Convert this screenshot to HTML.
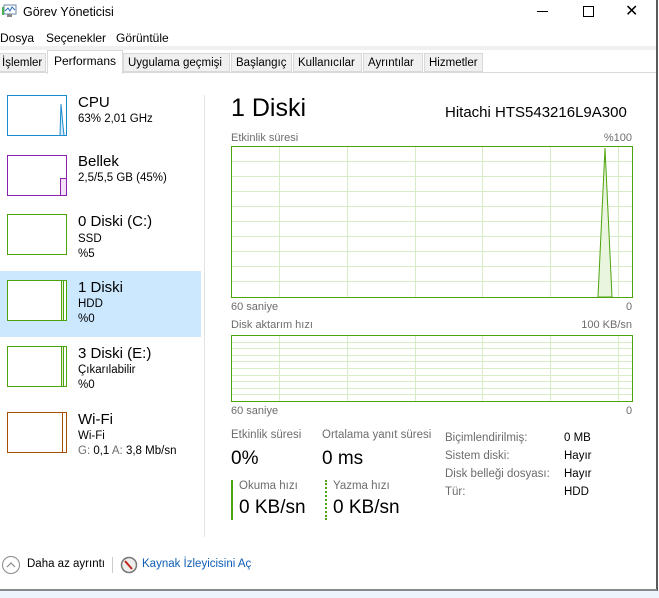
<!DOCTYPE html>
<html><head><meta charset="utf-8"><style>
*{margin:0;padding:0;box-sizing:border-box}
body{width:659px;height:598px;background:#fff;font-family:"Liberation Sans","DejaVu Sans",sans-serif;font-size:12px;color:#000;position:relative;overflow:hidden}
.a{position:absolute;white-space:nowrap}
.g{color:#6d6d6d}
.tab{position:absolute;top:53px;height:19px;background:#f0f0f0;border:1px solid #d9d9d9;font-size:11.5px;padding:3px 0 0 4px;color:#000}
.thumb{position:absolute;left:7px;width:60px;height:41px;background:#fff}
.t1{font-size:15px}
.t2{font-size:11.5px}
</style></head><body>
<!-- title -->
<svg class="a" style="left:1px;top:4px" width="16" height="14"><rect x="3" y="1" width="12" height="9" fill="#fff" stroke="#6b8aa8"/><polyline points="4,7 7,4 9,7 11,3 14,6" fill="none" stroke="#2a70c0" stroke-width="1"/><rect x="1" y="3" width="2" height="8" fill="#4caf50"/><rect x="6" y="10" width="5" height="3" fill="#888"/></svg>
<div class="a" style="left:23px;top:5px;font-size:12.5px">Görev Yöneticisi</div>
<div class="a" style="left:537px;top:11px;width:11px;height:1px;background:#000"></div>
<div class="a" style="left:583px;top:6px;width:11px;height:11px;border:1px solid #000"></div>
<div class="a" style="left:625px;top:1px;font-size:16px">✕</div>
<div class="a" style="left:656px;top:0;width:2px;height:592px;background:#5a5a5a"></div>
<!-- menu -->
<div class="a" style="left:0;top:31px;font-size:12px">Dosya</div>
<div class="a" style="left:46px;top:31px;font-size:12px">Seçenekler</div>
<div class="a" style="left:116px;top:31px;font-size:12px">Görüntüle</div>
<div class="a" style="left:0;top:46px;width:656px;height:4px;background:#f0f0f0"></div>
<!-- tabs -->
<div class="tab" style="left:-3px;width:49px">İşlemler</div>
<div class="tab" style="left:123px;width:107px">Uygulama geçmişi</div>
<div class="tab" style="left:231px;width:61px">Başlangıç</div>
<div class="tab" style="left:293px;width:69px">Kullanıcılar</div>
<div class="tab" style="left:363px;width:60px">Ayrıntılar</div>
<div class="tab" style="left:424px;width:59px">Hizmetler</div>
<div class="a" style="left:47px;top:50px;width:76px;height:24px;background:#fff;border:1px solid #d9d9d9;border-bottom:none;font-size:12px;padding:3px 0 0 6px">Performans</div>
<div class="a" style="left:0;top:72px;width:47px;height:1px;background:#d9d9d9"></div>
<div class="a" style="left:123px;top:72px;width:533px;height:1px;background:#d9d9d9"></div>
<!-- left list -->
<div class="a" style="left:0;top:271px;width:201px;height:66px;background:#cce8ff"></div>
<div class="thumb" style="top:95px;border:1px solid #1a8bd0"><svg width="58" height="39" style="position:absolute;left:0;top:0"><polyline points="52,39 53,8 55,30 56,39" fill="#d6ecfa" stroke="#1a8bd0"/></svg></div>
<div class="a t1" style="left:78px;top:94px">CPU</div><div class="a t2" style="left:78px;top:113px">63% 2,01 GHz</div>
<div class="thumb" style="top:155px;border:1px solid #8b1fae"><div class="a" style="left:52px;top:22px;width:6px;height:17px;border:1px solid #8b1fae;background:#f1e0f6;border-right:none;border-bottom:none"></div></div>
<div class="a t1" style="left:78px;top:153px">Bellek</div><div class="a t2" style="left:78px;top:172px">2,5/5,5 GB (45%)</div>
<div class="thumb" style="top:214px;border:1px solid #4da30b"></div>
<div class="a t1" style="left:78px;top:213px">0 Diski (C:)</div><div class="a t2" style="left:78px;top:233px">SSD</div><div class="a t2" style="left:78px;top:248px">%5</div>
<div class="thumb" style="top:280px;border:1px solid #4da30b"><div class="a" style="left:53px;top:0;width:3px;height:39px;border-left:1px solid #4da30b;border-right:1px solid #4da30b;background:#e8f5dc"></div></div>
<div class="a t1" style="left:78px;top:279px">1 Diski</div><div class="a t2" style="left:78px;top:298px">HDD</div><div class="a t2" style="left:78px;top:313px">%0</div>
<div class="thumb" style="top:346px;border:1px solid #4da30b"><div class="a" style="left:53px;top:0;width:3px;height:39px;border-left:1px solid #4da30b;border-right:1px solid #4da30b;background:#e8f5dc"></div></div>
<div class="a t1" style="left:78px;top:345px">3 Diski (E:)</div><div class="a t2" style="left:78px;top:364px">Çıkarılabilir</div><div class="a t2" style="left:78px;top:379px">%0</div>
<div class="thumb" style="top:412px;border:1px solid #a74f01"><div class="a" style="left:54px;top:0;width:1px;height:39px;background:#a74f01"></div></div>
<div class="a t1" style="left:78px;top:411px">Wi-Fi</div><div class="a t2" style="left:78px;top:430px">Wi-Fi</div>
<div class="a t2" style="left:78px;top:445px"><span class="g">G:</span> 0,1 <span class="g">A:</span> 3,8 Mb/sn</div>
<div class="a" style="left:204px;top:95px;width:1px;height:442px;background:#e3e3e3"></div>
<!-- right -->
<div class="a" style="left:231px;top:94px;font-size:25px">1 Diski</div>
<div class="a" style="left:445px;top:104px;font-size:15px">Hitachi HTS543216L9A300</div>
<div class="a g" style="left:231px;top:132px;font-size:11px">Etkinlik süresi</div>
<div class="a g" style="left:632px;top:132px;font-size:11px;transform:translateX(-100%)">%100</div>
<svg class="a" style="left:231px;top:146px" width="402" height="152">
<g stroke="#d9ecc8" stroke-width="1">
<line x1="48.5" y1="0" x2="48.5" y2="152"/><line x1="116.5" y1="0" x2="116.5" y2="152"/><line x1="184.5" y1="0" x2="184.5" y2="152"/><line x1="251.5" y1="0" x2="251.5" y2="152"/><line x1="319.5" y1="0" x2="319.5" y2="152"/><line x1="387.5" y1="0" x2="387.5" y2="152"/>
<line x1="0" y1="15.5" x2="402" y2="15.5"/><line x1="0" y1="30.5" x2="402" y2="30.5"/><line x1="0" y1="45.5" x2="402" y2="45.5"/><line x1="0" y1="60.5" x2="402" y2="60.5"/><line x1="0" y1="75.5" x2="402" y2="75.5"/><line x1="0" y1="90.5" x2="402" y2="90.5"/><line x1="0" y1="105.5" x2="402" y2="105.5"/><line x1="0" y1="120.5" x2="402" y2="120.5"/><line x1="0" y1="135.5" x2="402" y2="135.5"/>
</g>
<polygon points="367,151 374,2 381,151" fill="#eaf5e0" stroke="#4da30b" stroke-width="1"/>
<rect x="0.5" y="0.5" width="401" height="151" fill="none" stroke="#4da30b"/>
</svg>
<div class="a g" style="left:231px;top:301px;font-size:11px">60 saniye</div>
<div class="a g" style="left:626px;top:301px;font-size:11px">0</div>
<div class="a g" style="left:231px;top:319px;font-size:11px">Disk aktarım hızı</div>
<div class="a g" style="left:632px;top:319px;font-size:11px;transform:translateX(-100%)">100 KB/sn</div>
<svg class="a" style="left:231px;top:335px" width="402" height="67">
<g stroke="#d9ecc8" stroke-width="1">
<line x1="48.5" y1="0" x2="48.5" y2="67"/><line x1="116.5" y1="0" x2="116.5" y2="67"/><line x1="184.5" y1="0" x2="184.5" y2="67"/><line x1="251.5" y1="0" x2="251.5" y2="67"/><line x1="319.5" y1="0" x2="319.5" y2="67"/><line x1="387.5" y1="0" x2="387.5" y2="67"/>
<line x1="0" y1="7.5" x2="402" y2="7.5"/><line x1="0" y1="13.5" x2="402" y2="13.5"/><line x1="0" y1="20.5" x2="402" y2="20.5"/><line x1="0" y1="26.5" x2="402" y2="26.5"/><line x1="0" y1="33.5" x2="402" y2="33.5"/><line x1="0" y1="40.5" x2="402" y2="40.5"/><line x1="0" y1="46.5" x2="402" y2="46.5"/><line x1="0" y1="53.5" x2="402" y2="53.5"/><line x1="0" y1="59.5" x2="402" y2="59.5"/>
</g>
<rect x="0.5" y="0.5" width="401" height="66" fill="none" stroke="#4da30b"/>
</svg>
<div class="a g" style="left:231px;top:405px;font-size:11px">60 saniye</div>
<div class="a g" style="left:626px;top:405px;font-size:11px">0</div>
<!-- stats -->
<div class="a g" style="left:231px;top:429px;font-size:11.5px">Etkinlik süresi</div>
<div class="a" style="left:231px;top:448px;font-size:19px">0%</div>
<div class="a g" style="left:322px;top:429px;font-size:11.5px">Ortalama yanıt süresi</div>
<div class="a" style="left:322px;top:448px;font-size:19px">0 ms</div>
<div class="a" style="left:231px;top:480px;width:2px;height:40px;background:#4da30b"></div>
<div class="a g" style="left:239px;top:480px;font-size:11.5px">Okuma hızı</div>
<div class="a" style="left:239px;top:497px;font-size:19px">0 KB/sn</div>
<div class="a" style="left:325px;top:480px;width:0;height:40px;border-left:2px dotted #4da30b"></div>
<div class="a g" style="left:333px;top:480px;font-size:11.5px">Yazma hızı</div>
<div class="a" style="left:333px;top:497px;font-size:19px">0 KB/sn</div>
<div class="a g" style="left:445px;top:429px;font-size:11.5px;line-height:18px">Biçimlendirilmiş:<br>Sistem diski:<br>Disk belleği dosyası:<br>Tür:</div>
<div class="a" style="left:564px;top:429px;font-size:11.5px;line-height:18px">0 MB<br>Hayır<br>Hayır<br>HDD</div>
<!-- footer -->
<svg class="a" style="left:1px;top:555px" width="20" height="20"><circle cx="10" cy="10" r="8.5" fill="none" stroke="#888"/><polyline points="6,12 10,8 14,12" fill="none" stroke="#888" stroke-width="1.2"/></svg>
<div class="a" style="left:27px;top:558px;font-size:11.5px">Daha az ayrıntı</div>
<div class="a" style="left:112px;top:557px;width:1px;height:16px;background:#ccc"></div>
<svg class="a" style="left:120px;top:556px" width="18" height="18"><circle cx="9" cy="9" r="7.5" fill="#eee" stroke="#777" stroke-width="1.5"/><line x1="5" y1="5" x2="12" y2="13" stroke="#c0281c" stroke-width="2"/></svg>
<div class="a" style="left:142px;top:558px;font-size:11.5px;color:#0f5eb5">Kaynak İzleyicisini Aç</div>
<div class="a" style="left:0;top:589px;width:657px;height:2px;background:#8a8a8a"></div>
<div class="a" style="left:0;top:591px;width:659px;height:7px;background:#eef4fb"></div>
</body></html>
